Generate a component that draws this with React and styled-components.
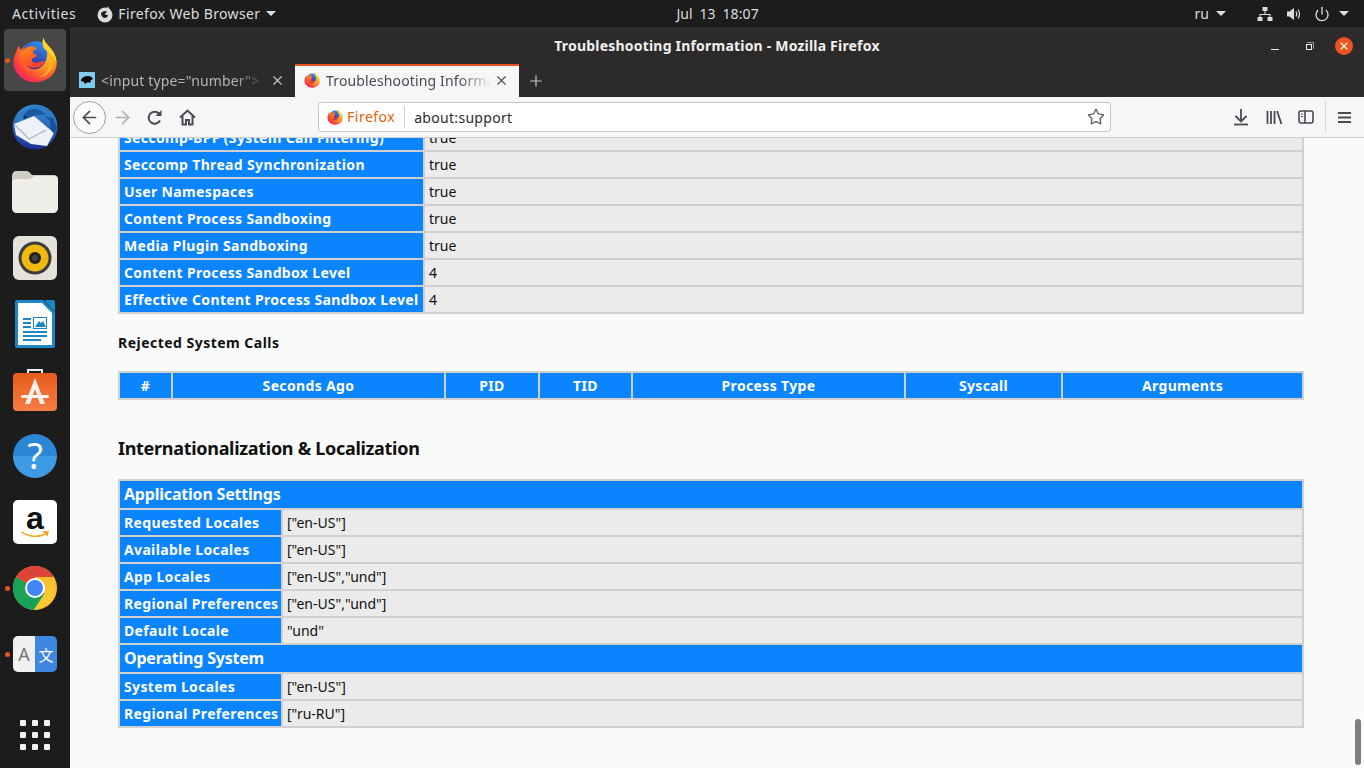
import React from "react";
import styled, { createGlobalStyle } from "styled-components";
import {
  ArrowLeft,
  ArrowRight,
  Star,
  X,
  Plus,
  Power,
} from "lucide-react";

const UI_FONT = `"Noto Sans", "Open Sans", sans-serif`;

const GlobalStyle = createGlobalStyle`
  html, body { margin: 0; padding: 0; height: 100%; overflow: hidden; }
  body { font-family: ${UI_FONT}; background: #1d1d1d; }
  * { box-sizing: border-box; }
`;

const Screen = styled.div`
  width: 1364px;
  height: 768px;
  display: flex;
  flex-direction: column;
  overflow: hidden;
`;

/* gnome top bar */
const TopBar = styled.header`
  height: 27px;
  flex: none;
  display: flex;
  align-items: center;
  background: #1c1c1c;
  color: #ddd;
  font-size: 14px;
  padding: 0 0 0 12px;
`;

const Activities = styled.span`
  letter-spacing: 0.6px;
`;

const AppMenu = styled.div`
  display: flex;
  align-items: center;
  gap: 4px;
  margin-left: 20px;
  letter-spacing: 0.35px;
`;

const Caret = styled.span`
  width: 0;
  height: 0;
  border-left: 5px solid transparent;
  border-right: 5px solid transparent;
  border-top: 5px solid #ddd;
  margin-left: ${(p) => p.$gap || 0}px;
`;

const Clock = styled.div`
  margin-left: 400px;
  word-spacing: 3px;
  letter-spacing: 0.1px;
`;

const Tray = styled.div`
  margin-left: auto;
  display: flex;
  align-items: center;
  padding-right: 15px;
`;

const TrayIcon = styled.span`
  display: flex;
  margin-left: ${(p) => p.$gap}px;
`;

const Desktop = styled.div`
  flex: 1;
  display: flex;
  min-height: 0;
`;

/* launcher */
const Dock = styled.nav`
  width: 70px;
  flex: none;
  background: #1c1c1c;
  display: flex;
  flex-direction: column;
  align-items: center;
  gap: 4px;
  padding: 2px 0 18px;
`;

const DockItem = styled.div`
  position: relative;
  width: 62px;
  height: 62px;
  display: flex;
  align-items: center;
  justify-content: center;
  border-radius: 4px;
  background: ${(p) => (p.$active ? "#474747" : "transparent")};

  &::before {
    content: "";
    display: ${(p) => (p.$running ? "block" : "none")};
    position: absolute;
    left: 1px;
    top: 29px;
    width: 5px;
    height: 5px;
    border-radius: 50%;
    background: #e9551f;
  }
`;

const AppsGrid = styled.div`
  margin-top: auto;
  display: grid;
  grid-template-columns: repeat(3, 6px);
  grid-auto-rows: 6px;
  gap: 6px;

  span {
    background: #f2f2f2;
    border-radius: 1px;
  }
`;

/* browser window */
const Window = styled.main`
  flex: 1;
  min-width: 0;
  display: flex;
  flex-direction: column;
`;

const TitleBar = styled.div`
  height: 37px;
  flex: none;
  background: #2c2b29;
  color: #f0f0f0;
  font-size: 14px;
  font-weight: 700;
  letter-spacing: 0.2px;
  display: flex;
  align-items: center;
  justify-content: center;
  position: relative;
  padding-bottom: 1px;
`;

const WindowControls = styled.div`
  position: absolute;
  right: 11px;
  top: 10px;
  display: flex;
  align-items: center;
`;

const CloseButton = styled.span`
  width: 18px;
  height: 18px;
  margin-left: 23px;
  border-radius: 50%;
  background: #e9541f;
  display: flex;
  align-items: center;
  justify-content: center;
  color: #fff;
`;

const Maximize = styled.span`
  position: relative;
  width: 6px;
  height: 6px;
  margin-left: 27px;
  margin-top: 1px;
  border: 1px solid #eee;

  &::after {
    content: "";
    position: absolute;
    right: -3px;
    top: -3px;
    width: 6px;
    height: 6px;
    border-top: 1px solid #999;
    border-right: 1px solid #999;
  }
`;

const Minimize = styled.span`
  width: 8px;
  height: 1px;
  margin-top: 7px;
  background: #eee;
`;

const TabStrip = styled.div`
  height: 33px;
  flex: none;
  display: flex;
  align-items: stretch;
  background: #2c2b29;
`;

const Tab = styled.div`
  width: ${(p) => (p.$active ? 224 : 225)}px;
  flex: none;
  display: flex;
  align-items: center;
  padding: ${(p) => (p.$active ? "0 10px 3px 9px" : "0 10px 1px 9px")};
  font-size: 14px;
  color: ${(p) => (p.$active ? "#4a4a4f" : "#b5b5b5")};
  background: ${(p) => (p.$active ? "#f5f6f7" : "transparent")};
  border-top: ${(p) => (p.$active ? "2px solid #e9541f" : "none")};
`;

const TabTitle = styled.span`
  flex: 1;
  min-width: 0;
  margin: 0 2px 0 6px;
  letter-spacing: 0.15px;
  white-space: nowrap;
  overflow: hidden;
  -webkit-mask-image: linear-gradient(to right, #000 80%, transparent 100%);
  mask-image: linear-gradient(to right, #000 80%, transparent 100%);
`;

const NewTab = styled.span`
  display: flex;
  align-items: center;
  margin-left: 8px;
  color: #c8c8c8;
`;

const Toolbar = styled.div`
  height: 41px;
  flex: none;
  display: flex;
  align-items: center;
  background: #f5f6f7;
  border-bottom: 1px solid #cfcfd0;
  padding: 0 0 0 3px;
  color: #4a4a4f;
`;

const BackButton = styled.span`
  width: 33px;
  height: 33px;
  border-radius: 50%;
  border: 1px solid #9c9c9e;
  background: #fbfbfb;
  display: flex;
  align-items: center;
  justify-content: center;
  flex: none;
`;

const ToolButton = styled.span`
  display: flex;
  flex: none;
  margin-left: ${(p) => p.$gap}px;
  color: ${(p) => p.$color || "#4a4a4f"};
`;

const UrlBar = styled.div`
  width: 793px;
  height: 30px;
  flex: none;
  margin-left: 122px;
  display: flex;
  align-items: center;
  background: #fff;
  border: 1px solid #c5c5c7;
  border-radius: 3px;
  padding: 0 5px 0 8px;
  font-size: 14px;
  color: #2b2b2f;
`;

const Identity = styled.span`
  color: #e66000;
  margin-left: 4px;
  padding-right: 9px;
  margin-right: 9px;
  border-right: 1px solid #cfcfd0;
  line-height: 22px;
  letter-spacing: 0.5px;
`;

const UrlText = styled.span`
  flex: 1;
  letter-spacing: 0.3px;
`;

const ToolSeparator = styled.span`
  width: 1px;
  height: 32px;
  margin-left: 11px;
  background: #d8d8d9;
`;

/* about:support page */
const Content = styled.div`
  position: relative;
  flex: 1;
  min-height: 0;
  overflow: hidden;
  background: #f9fafa;
  padding: 0 60px 0 48px;
  color: #111;
  font-size: 14px;
`;

const DataTable = styled.table`
  width: 1186px;
  table-layout: fixed;
  border-collapse: collapse;
  border: 2px solid #d0d0d0;
  margin-top: ${(p) => p.$top || 0}px;
`;

const Row = styled.tr`
  height: 27px;
`;

const Label = styled.th`
  padding: 0 4px;
  border: 2px solid #d0d0d0;
  background: #0a84ff;
  color: #fff;
  font-size: 14px;
  font-weight: 700;
  text-align: ${(p) => (p.$center ? "center" : "left")};
  white-space: nowrap;
  letter-spacing: 0.35px;
  overflow: hidden;
`;

const SectionHead = styled(Label)`
  font-size: 16px;
  height: 29px;
  padding-bottom: 2px;
  letter-spacing: -0.2px;
`;

const Value = styled.td`
  padding: 0 4px;
  border: 2px solid #d0d0d0;
  background: #ebebeb;
  color: #111;
  white-space: nowrap;
`;

const SubHeading = styled.h3`
  margin: 19px 0 19px;
  font-size: 14px;
  line-height: 19px;
  font-weight: 700;
  letter-spacing: 0.48px;
`;

const SectionTitle = styled.h2`
  margin: 36px 0 19px;
  font-size: 18px;
  line-height: 24px;
  font-weight: 700;
  letter-spacing: -0.3px;
`;

const ScrollThumb = styled.div`
  position: absolute;
  right: 3px;
  bottom: 3px;
  width: 6px;
  height: 46px;
  border-radius: 3px;
  background: #7d7d7d;
`;

const FirefoxLogo = ({ size }) => (
  <svg width={size} height={size} viewBox="0 0 64 64">
    <defs>
      <radialGradient id="ffBody" cx="0.72" cy="0.25" r="0.95">
        <stop offset="0" stopColor="#ffe226" />
        <stop offset="0.42" stopColor="#ff9a1f" />
        <stop offset="0.75" stopColor="#ff3d3a" />
        <stop offset="1" stopColor="#e31587" />
      </radialGradient>
      <linearGradient id="ffGlobe" x1="0.7" y1="0" x2="0.3" y2="1">
        <stop offset="0" stopColor="#2f8cf0" />
        <stop offset="1" stopColor="#40208f" />
      </linearGradient>
      <linearGradient id="ffHead" x1="0.2" y1="0" x2="0.7" y2="1">
        <stop offset="0" stopColor="#ff8a16" />
        <stop offset="1" stopColor="#ff3b30" />
      </linearGradient>
    </defs>
    <path d="M44 1c1 6 5 9 10 15 6 8 9 15 8 24C60 54 46 63 32 63 16 63 3 51 2 36c0-6 1-11 4-16l3-8 3 6c3-3 7-7 12-9 8-2 15 0 19 4C42 10 42 5 44 1z" fill="url(#ffBody)" />
    <path d="M14 24C15 13 23 6 33 6c9 0 15 5 16 14 1 12-6 25-18 25-9 0-16-10-17-21z" fill="url(#ffGlobe)" />
    <path d="M14 21c3-5 8-8 13-8 3 0 6 1 8 4-3 0-6 1-6 4 0 2 5 3 5 5 0 2-4 3-6 4-2 3 1 6 6 6 4 0 9-3 12-2-3 6-9 9-15 9-10 0-16-7-18-14-1-3 0-6 1-8z" fill="url(#ffHead)" />
    <path d="M44 1c1 6 5 9 10 15 5 6 8 13 8 21-2-8-8-14-14-18-4-3-6-6-5-10 0-3 0-6 1-8z" fill="#ffd426" />
    <path d="M48 19c6 5 10 12 9 20-2 10-11 17-20 17 8-3 14-9 15-18 1-7-1-14-4-19z" fill="#ffb11f" />
  </svg>
);

const FirefoxMono = () => (
  <svg width="18" height="18" viewBox="0 0 18 18">
    <circle cx="9" cy="10" r="7.500" fill="#dcdcdc" />
    <path d="M12 1c0 2 2 3 3 5l-4 1c-1-2 0-4 1-6z" fill="#dcdcdc" />
    <path d="M5 8c2-2 5-3 6-1-1 1-2 1-2 2s2 1 3 1c0 2-2 3-4 3-2-1-3-3-3-5z" fill="#1c1c1c" />
  </svg>
);

const ThunderbirdLogo = () => (
  <svg width="48" height="48" viewBox="0 0 48 48">
    <defs>
      <linearGradient id="tbBlue" x1="0.5" y1="0" x2="0.5" y2="1">
        <stop offset="0" stopColor="#3e97dc" />
        <stop offset="1" stopColor="#1a2f8f" />
      </linearGradient>
    </defs>
    <circle cx="24" cy="25" r="22.500" fill="url(#tbBlue)" />
    <path d="M6 22c1-8 6-15 12-17 7-4 18-2 24 7 2 3 4 8 4 12-5-7-11-10-18-9-6 0-12 2-22 7z" fill="#2c7cc6" />
    <path d="M12 16c1-5 5-9 10-9 5 0 10 2 13 6-6-1-11 0-15 2l-6 3z" fill="#1b5aa0" />
    <path d="M3 22l20-8 20 17-7 13-16-2-15-9z" fill="#eef1f6" />
    <path d="M4 23l14 14 17-9" fill="none" stroke="#aab4c8" strokeWidth="1.300" />
    <path d="M34 14l5 5 1 8 3 5 3-6-4-10z" fill="#1b4f9c" />
    <circle cx="14" cy="15" r="1.300" fill="#0c1a40" />
  </svg>
);

const FilesIcon = () => (
  <svg width="46" height="42" viewBox="0 0 46 42">
    <path d="M0 5c0-3 2-5 4-5h10c3 0 4 2 6 4h21c3 0 5 1 5 4v8H0z" fill="#cfccc1" />
    <path d="M0 11c0-2 2-3 4-3h13c3 0 4-3 6-3h18c3 0 5 2 5 4v28c0 3-2 5-5 5H5c-3 0-5-2-5-5z" fill="#efeee8" />
  </svg>
);

const RhythmboxIcon = () => (
  <svg width="46" height="46" viewBox="0 0 46 46">
    <rect x="1" y="1" width="44" height="44" rx="6" fill="#e4e2d9" />
    <circle cx="23" cy="23" r="16.500" fill="#3b3a41" />
    <circle cx="23" cy="23" r="13.500" fill="#efb90f" />
    <circle cx="23" cy="23" r="6" fill="#222" />
    <circle cx="23" cy="23" r="3" fill="#444" />
  </svg>
);

const WriterIcon = () => (
  <svg width="40" height="48" viewBox="0 0 40 48">
    <path d="M2 0h26l12 12v34c0 1-1 2-2 2H2c-1 0-2-1-2-2V2C0 1 1 0 2 0z" fill="#1b87c5" />
    <path d="M3 3h24l10 10v32H3z" fill="#fff" />
    <path d="M29 0l11 12V2c0-1-1-2-2-2z" fill="#1b87c5" />
    <rect x="8" y="18" width="8" height="2" fill="#1b87c5" />
    <rect x="8" y="22" width="8" height="2" fill="#1b87c5" />
    <rect x="8" y="26" width="8" height="2" fill="#1b87c5" />
    <rect x="8" y="31" width="24" height="2" fill="#1b87c5" />
    <rect x="8" y="35" width="24" height="2" fill="#1b87c5" />
    <rect x="8" y="39" width="18" height="2" fill="#1b87c5" />
    <rect x="18.500" y="17.500" width="13" height="11" fill="#fff" stroke="#1b87c5" />
    <path d="M20 27l4-6 2 2 2-2 3 6z" fill="#1b87c5" />
  </svg>
);

const SoftwareIcon = () => (
  <svg width="44" height="44" viewBox="0 0 44 44">
    <defs>
      <linearGradient id="swBag" x1="0" y1="0" x2="0" y2="1">
        <stop offset="0" stopColor="#e85a1c" />
        <stop offset="1" stopColor="#f47d45" />
      </linearGradient>
    </defs>
    <path d="M15 6V2h14v4" fill="none" stroke="#eee" strokeWidth="2" />
    <rect x="0" y="5" width="44" height="38" rx="4" fill="url(#swBag)" />
    <path d="M22 10l-10 26h5l5-15 5 15h5z" fill="#fbf1ea" />
    <rect x="8" y="27" width="28" height="3" rx="1.500" fill="#fbf1ea" />
  </svg>
);

const HelpIcon = styled.span`
  width: 44px;
  height: 44px;
  border-radius: 50%;
  background: linear-gradient(#2a87d6 0 50%, #3d9be3 50% 100%);
  color: #fff;
  font-size: 36px;
  line-height: 44px;
  text-align: center;
`;

const AmazonTile = styled.span`
  position: relative;
  width: 44px;
  height: 44px;
  border-radius: 5px;
  background: #fff;
  color: #111;
  font-family: "Liberation Sans", sans-serif;
  font-size: 32px;
  font-weight: 700;
  line-height: 36px;
  text-align: center;

  svg {
    position: absolute;
    left: 8px;
    bottom: 6px;
  }
`;

const ChromeLogo = () => (
  <svg width="44" height="44" viewBox="0 0 44 44">
    <circle cx="22" cy="22" r="22" fill="#fbc02d" />
    <path d="M22 22L3 11A22 22 0 0 1 41 11H22z" fill="#db4437" />
    <path d="M22 22L3 11A22 22 0 0 0 21 44L32 27z" fill="#1ba15a" />
    <path d="M22 22H41A22 22 0 0 1 21 44L32 27z" fill="#fcc934" />
    <circle cx="22" cy="22" r="10" fill="#fff" />
    <circle cx="22" cy="22" r="8" fill="#4285f4" />
  </svg>
);

const TranslateTile = styled.span`
  width: 44px;
  height: 36px;
  border-radius: 5px;
  overflow: hidden;
  display: grid;
  grid-template-columns: 1fr 1fr;
`;

const TranslateSide = styled.span`
  display: flex;
  align-items: center;
  justify-content: center;
  font-size: ${(p) => (p.$blue ? 15 : 18)}px;
  color: ${(p) => (p.$blue ? "#fff" : "#777")};
  background: ${(p) => (p.$blue ? "#3f87e0" : "#f0f0f0")};
  font-family: "Noto Sans", "Noto Sans CJK SC", sans-serif;
`;

const NetworkIcon = () => (
  <svg width="16" height="14" viewBox="0 0 16 14" fill="#ddd">
    <rect x="5.500" y="0" width="5" height="4" rx="0.500" />
    <rect x="0.500" y="10" width="5" height="4" rx="0.500" />
    <rect x="10.500" y="10" width="5" height="4" rx="0.500" />
    <path d="M7.500 4h1v3h5v3h-1V8H3.500v2h-1V7h5z" />
  </svg>
);

const VolumeIcon = () => (
  <svg width="16" height="16" viewBox="0 0 16 16" fill="none" stroke="#ddd">
    <path d="M1 5.500h2.500L8 2v12l-4.500-3.500H1z" fill="#ddd" stroke="none" />
    <path d="M10 5.500c1 1.500 1 3.500 0 5" strokeWidth="1.200" />
    <path d="M12 3.500c2 2.500 2 6.500 0 9" strokeWidth="1.200" />
  </svg>
);

const ReloadIcon = () => (
  <svg width="17" height="17" viewBox="0 0 17 17" fill="none" stroke="currentColor" strokeWidth="2">
    <path d="M14 11.500A6 6 0 1 1 13 4.500" />
    <path d="M15.500 1v6H9.500z" fill="currentColor" stroke="none" />
  </svg>
);

const HomeIcon = () => (
  <svg width="17" height="17" viewBox="0 0 17 17" fill="none" stroke="currentColor" strokeWidth="2">
    <path d="M1 8.500l7.500-7 7.500 7" />
    <path d="M3.500 7v8.500h3.500V11h3v4.500h3.500V7" />
  </svg>
);

const DownloadIcon = () => (
  <svg width="16" height="18" viewBox="0 0 16 18" fill="none" stroke="currentColor" strokeWidth="1.800">
    <path d="M8 1v12M2.500 8l5.500 5.500L13.500 8" />
    <path d="M1 16.500h14" />
  </svg>
);

const LibraryIcon = () => (
  <svg width="17" height="16" viewBox="0 0 17 16" fill="none" stroke="currentColor" strokeWidth="1.800">
    <path d="M1.500 2v13M5 2v13M8.500 2v13M11 2l4.500 13" />
  </svg>
);

const SidebarIcon = () => (
  <svg width="16" height="14" viewBox="0 0 16 14" fill="none" stroke="currentColor" strokeWidth="1.600">
    <rect x="1" y="1" width="14" height="12" rx="2" />
    <path d="M7 1v12" />
    <path d="M3 4h2M3 6.500h2" strokeWidth="1" />
  </svg>
);

const MenuIcon = () => (
  <svg width="13" height="13" viewBox="0 0 13 13" fill="none" stroke="currentColor" strokeWidth="2">
    <path d="M0 2h13M0 6.500h13M0 11h13" />
  </svg>
);

const TabFavicon = () => (
  <svg width="16" height="16" viewBox="0 0 16 16">
    <rect width="16" height="16" fill="#7ecbee" />
    <path d="M2 8c1-3 4-4 7-4 2 0 4 1 5 3l-2 1-1 3-2-1-3 2-1-2-3-1z" fill="#000" />
  </svg>
);

const sandboxRows = [
  ["Seccomp-BPF (System Call Filtering)", "true"],
  ["Seccomp Thread Synchronization", "true"],
  ["User Namespaces", "true"],
  ["Content Process Sandboxing", "true"],
  ["Media Plugin Sandboxing", "true"],
  ["Content Process Sandbox Level", "4"],
  ["Effective Content Process Sandbox Level", "4"],
];

const syscallCols = [
  ["#", 53],
  ["Seconds Ago", 273],
  ["PID", 94],
  ["TID", 93],
  ["Process Type", 273],
  ["Syscall", 157],
  ["Arguments", 241],
];

const appRows = [
  ["Requested Locales", '["en-US"]'],
  ["Available Locales", '["en-US"]'],
  ["App Locales", '["en-US","und"]'],
  ["Regional Preferences", '["en-US","und"]'],
  ["Default Locale", '"und"'],
];

const osRows = [
  ["System Locales", '["en-US"]'],
  ["Regional Preferences", '["ru-RU"]'],
];

const KeyValueRows = ({ rows }) =>
  rows.map(([k, v]) => (
    <Row key={k}>
      <Label>{k}</Label>
      <Value>{v}</Value>
    </Row>
  ));

const App = () => (
  <Screen>
    <GlobalStyle />
    <TopBar>
      <Activities>Activities</Activities>
      <AppMenu>
        <FirefoxMono />
        <span>Firefox Web Browser</span>
        <Caret $gap={2} />
      </AppMenu>
      <Clock>Jul 13 18:07</Clock>
      <Tray>
        <span>ru</span>
        <Caret $gap={7} />
        <TrayIcon $gap={31}><NetworkIcon /></TrayIcon>
        <TrayIcon $gap={13}><VolumeIcon /></TrayIcon>
        <TrayIcon $gap={12}><Power size={16} strokeWidth={2} /></TrayIcon>
        <Caret $gap={9} />
      </Tray>
    </TopBar>
    <Desktop>
      <Dock>
        <DockItem $active $running><FirefoxLogo size={46} /></DockItem>
        <DockItem><ThunderbirdLogo /></DockItem>
        <DockItem><FilesIcon /></DockItem>
        <DockItem><RhythmboxIcon /></DockItem>
        <DockItem><WriterIcon /></DockItem>
        <DockItem><SoftwareIcon /></DockItem>
        <DockItem><HelpIcon>?</HelpIcon></DockItem>
        <DockItem>
          <AmazonTile>
            a
            <svg width="28" height="7" viewBox="0 0 28 7" fill="none" stroke="#f79c1c" strokeWidth="1.500">
              <path d="M1 1c6 5 17 6 25 1M22 1l5 0-1 4" />
            </svg>
          </AmazonTile>
        </DockItem>
        <DockItem $running><ChromeLogo /></DockItem>
        <DockItem $running>
          <TranslateTile>
            <TranslateSide>A</TranslateSide>
            <TranslateSide $blue>文</TranslateSide>
          </TranslateTile>
        </DockItem>
        <AppsGrid>
          {Array.from({ length: 9 }, (_, i) => <span key={i} />)}
        </AppsGrid>
      </Dock>
      <Window>
        <TitleBar>
          Troubleshooting Information - Mozilla Firefox
          <WindowControls>
            <Minimize />
            <Maximize />
            <CloseButton><X size={12} strokeWidth={2.2} /></CloseButton>
          </WindowControls>
        </TitleBar>
        <TabStrip>
          <Tab>
            <TabFavicon />
            <TabTitle>&lt;input type="number"&gt; - HTML</TabTitle>
            <X size={15} strokeWidth={1.8} color="#c8c8c8" />
          </Tab>
          <Tab $active>
            <FirefoxLogo size={16} />
            <TabTitle>Troubleshooting Information</TabTitle>
            <X size={15} strokeWidth={1.8} />
          </Tab>
          <NewTab><Plus size={18} strokeWidth={1.6} /></NewTab>
        </TabStrip>
        <Toolbar>
          <BackButton><ArrowLeft size={21} strokeWidth={1.9} /></BackButton>
          <ToolButton $gap={6} $color="#b1b1b3"><ArrowRight size={21} strokeWidth={1.9} /></ToolButton>
          <ToolButton $gap={13}><ReloadIcon /></ToolButton>
          <ToolButton $gap={16}><HomeIcon /></ToolButton>
          <UrlBar>
            <FirefoxLogo size={16} />
            <Identity>Firefox</Identity>
            <UrlText>about:support</UrlText>
            <Star size={18} strokeWidth={1.8} color="#5f5f63" />
          </UrlBar>
          <ToolButton $gap={122}><DownloadIcon /></ToolButton>
          <ToolButton $gap={17}><LibraryIcon /></ToolButton>
          <ToolButton $gap={15}><SidebarIcon /></ToolButton>
          <ToolSeparator />
          <ToolButton $gap={12}><MenuIcon /></ToolButton>
        </Toolbar>
        <Content>
          <DataTable $top={-15}>
            <colgroup><col style={{ width: 305 }} /><col /></colgroup>
            <tbody><KeyValueRows rows={sandboxRows} /></tbody>
          </DataTable>
          <SubHeading>Rejected System Calls</SubHeading>
          <DataTable>
            <colgroup>
              {syscallCols.map(([name, w]) => <col key={name} style={{ width: w }} />)}
            </colgroup>
            <thead>
              <Row>
                {syscallCols.map(([name]) => <Label key={name} $center>{name}</Label>)}
              </Row>
            </thead>
          </DataTable>
          <SectionTitle>Internationalization &amp; Localization</SectionTitle>
          <DataTable>
            <colgroup><col style={{ width: 163 }} /><col /></colgroup>
            <tbody>
              <Row><SectionHead colSpan={2}>Application Settings</SectionHead></Row>
              <KeyValueRows rows={appRows} />
              <Row><SectionHead colSpan={2}>Operating System</SectionHead></Row>
              <KeyValueRows rows={osRows} />
            </tbody>
          </DataTable>
          <ScrollThumb />
        </Content>
      </Window>
    </Desktop>
  </Screen>
);

export default App;
